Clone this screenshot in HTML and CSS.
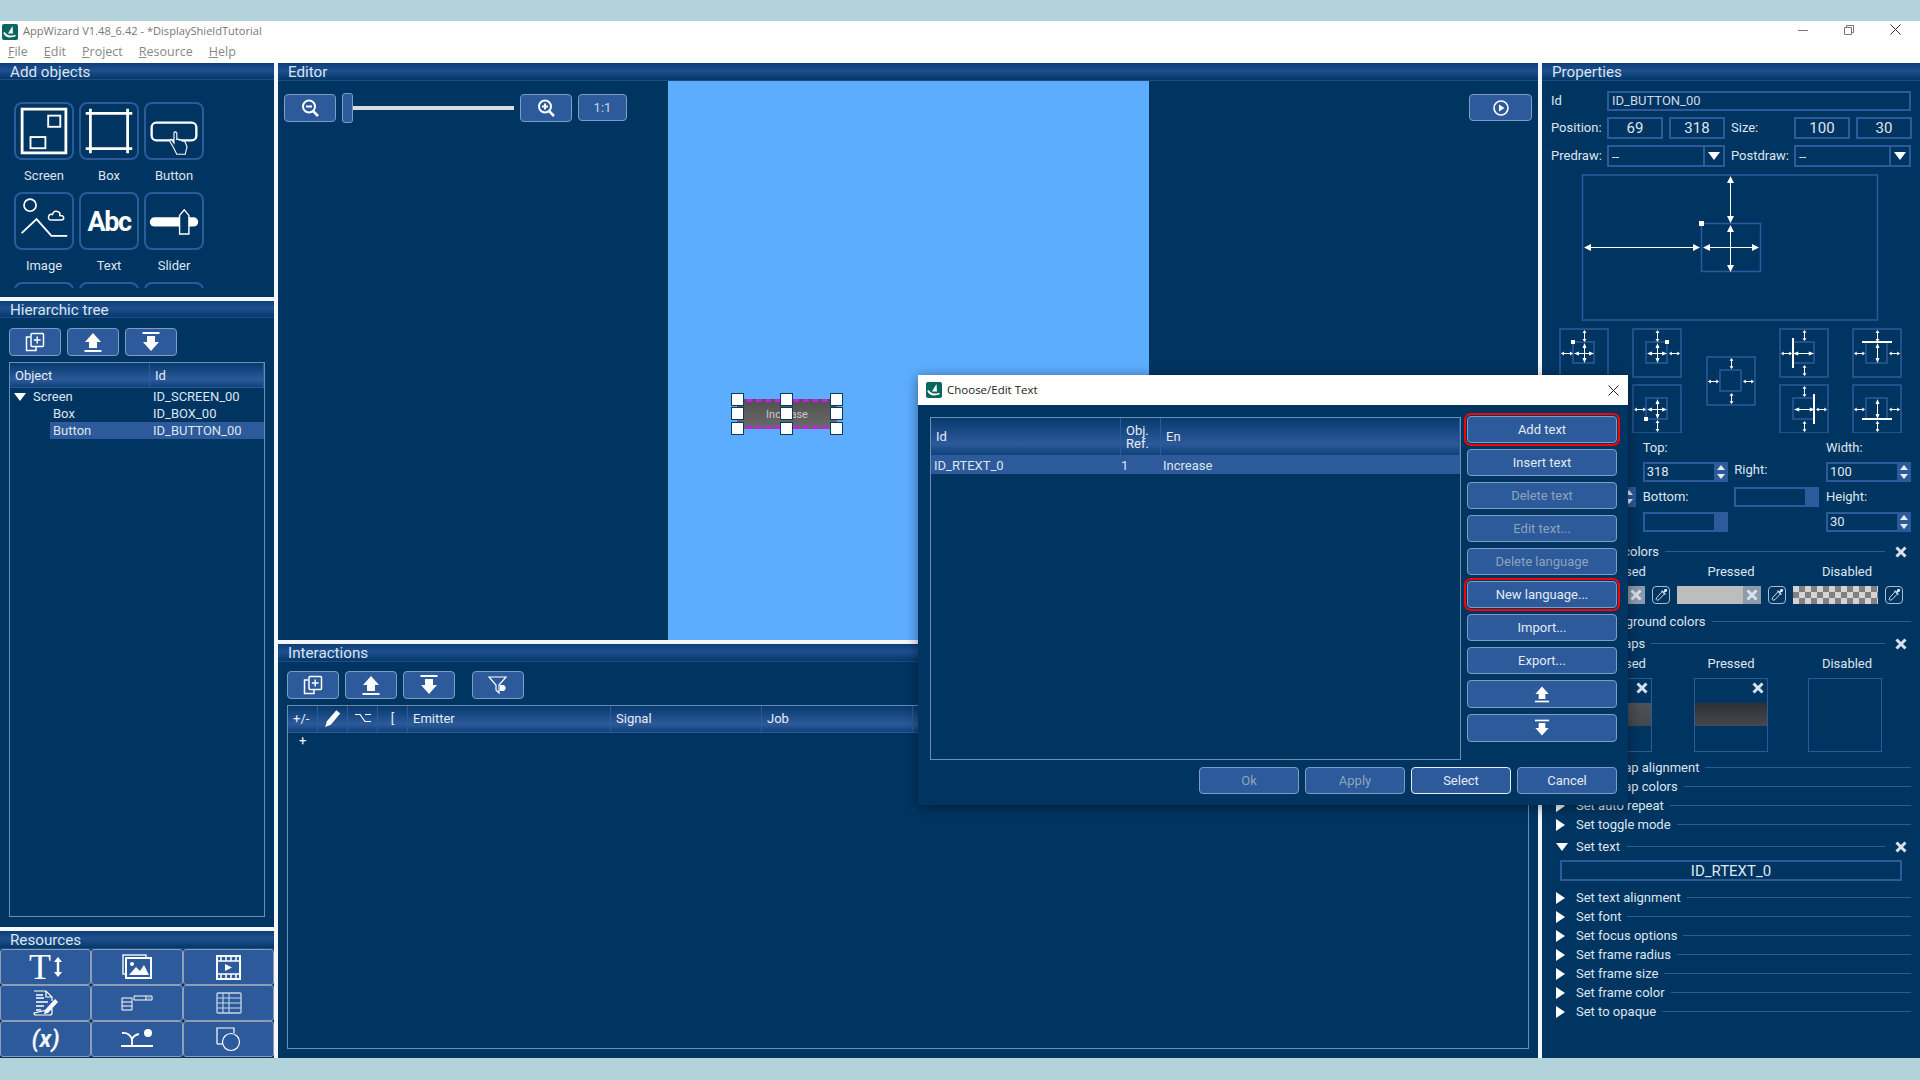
FILE: index.html
```html
<!DOCTYPE HTML>
<html>
<head>
  <title>AppWizard</title>
  <meta charset="utf-8">
  <link rel="stylesheet" href="styles.css">
</head>
<body>
<svg class="defs" aria-hidden="true">
  <symbol id="i-logo" viewBox="0 0 16 16">
    <rect width="16" height="16" rx="2" fill="#0c6660"/>
    <path d="M10.5 2 L11 9.5 L6 9.5 Z" fill="#fff"/>
    <path d="M2 8.5 Q5 14.5 13.5 11.5" fill="none" stroke="#fff" stroke-width="1.8"/>
  </symbol>
  <symbol id="i-copy" viewBox="0 0 24 24">
    <path d="M7 7 H3.5 V20.5 H13 V17" fill="none" stroke="#fff" stroke-width="1.5"/>
    <rect x="8" y="3.5" width="12.5" height="13" rx="1" fill="none" stroke="#fff" stroke-width="1.5"/>
    <path d="M14.2 6.5 V13.5 M10.8 10 H17.6" stroke="#fff" stroke-width="1.5"/>
  </symbol>
  <symbol id="i-up" viewBox="0 0 24 24">
    <path d="M12 3 L20 12 H16 V18 H8 V12 H4 Z" fill="#fff"/>
    <rect x="3.5" y="20" width="17" height="2" fill="#fff"/>
  </symbol>
  <symbol id="i-down" viewBox="0 0 24 24">
    <rect x="3.5" y="2" width="17" height="2" fill="#fff"/>
    <path d="M12 21 L20 12 H16 V6 H8 V12 H4 Z" fill="#fff"/>
  </symbol>
  <symbol id="i-x" viewBox="0 0 12 12">
    <path d="M1.5 1.5 L10.5 10.5 M10.5 1.5 L1.5 10.5" stroke="#d9e2ec" stroke-width="3"/>
  </symbol>
  <symbol id="i-pip" viewBox="0 0 18 18">
    <path d="M10.5 5 L13 7.5 L7 14 L4.5 15 L3.5 14 L4.5 11.5 Z" fill="none" stroke="#e4ebf3" stroke-width="1"/>
    <path d="M9.5 4 L14 8.5" stroke="#e4ebf3" stroke-width="1.3"/>
    <path d="M11.5 5.5 L13 2.5 Q14.5 1.5 15.5 2.5 Q16.5 3.5 15.5 5 L12.5 6.5 Z" fill="#e4ebf3"/>
  </symbol>
  <symbol id="da-h" viewBox="0 0 12 5" preserveAspectRatio="none">
    <path d="M0 2.5 L3 .5 V4.5 Z M12 2.5 L9 .5 V4.5 Z" fill="#fff"/><rect x="2" y="2" width="8" height="1" fill="#fff"/>
  </symbol>
  <symbol id="da-v" viewBox="0 0 5 12" preserveAspectRatio="none">
    <path d="M2.5 0 L.5 3 H4.5 Z M2.5 12 L.5 9 H4.5 Z" fill="#fff"/><rect x="2" y="2" width="1" height="8" fill="#fff"/>
  </symbol>
  <symbol id="anc" viewBox="0 0 50 50">
    <rect x="1" y="1" width="48" height="48" fill="none" stroke="#2c5a9a" stroke-width="1.5"/>
    <rect x="14" y="14" width="21" height="21" fill="none" stroke="#2c5a9a" stroke-width="1.5"/>
  </symbol>
</svg>

<div class="band"></div>
<div class="window">
  <div class="titlebar">
    <svg class="logo"><use href="#i-logo"/></svg>
    <span class="title-text">AppWizard V1.48_6.42 - *DisplayShieldTutorial</span>
    <span class="win-ctrl">
      <svg width="10" height="10"><path d="M0 5.5 H10" stroke="#777"/></svg>
      <svg width="10" height="10"><path d="M.5 2.5 H7.5 V9.5 H.5 Z M2.5 2.5 V.5 H9.5 V7.5 H7.5" fill="none" stroke="#777"/></svg>
      <svg width="11" height="11"><path d="M.5 .5 L10.5 10.5 M10.5 .5 L.5 10.5" stroke="#333"/></svg>
    </span>
  </div>
  <div class="menubar">
    <span><u>F</u>ile</span><span><u>E</u>dit</span><span><u>P</u>roject</span><span><u>R</u>esource</span><span><u>H</u>elp</span>
  </div>

  <div class="main">
    <div class="col-left">
      <section class="panel add-objects">
        <div class="panel-head head-17">Add objects</div>
        <div class="obj-scroll">
          <div class="obj-grid">
            <div class="obj">
              <svg class="obj-btn" viewBox="0 0 60 58">
                <rect x="6.5" y="5.5" width="47" height="47" fill="none" stroke="#fff" stroke-width="3"/>
                <rect x="34.5" y="12.5" width="13" height="12" fill="none" stroke="#fff" stroke-width="2"/>
                <rect x="15.5" y="35.5" width="16" height="12" fill="none" stroke="#fff" stroke-width="2"/>
              </svg>
              <span>Screen</span>
            </div>
            <div class="obj">
              <svg class="obj-btn" viewBox="0 0 60 58">
                <path d="M10 5 V53 M50 5 V53 M5 10 H55 M5 48 H55" stroke="#fff" stroke-width="3" fill="none"/>
              </svg>
              <span>Box</span>
            </div>
            <div class="obj">
              <svg class="obj-btn" viewBox="0 0 60 58">
                <rect x="6" y="20" width="48" height="19" rx="5" fill="none" stroke="#fff" stroke-width="2.5"/>
                <path d="M33 54 L29 46 L26 41 Q25 38 27 38 L30 42 L30 31 Q31 29 33 31 L33 38 Q35 37 36 39 Q38 38 39 40 Q41 39 42 41 L44 46 L42 54 Z" fill="#003562" stroke="#fff" stroke-width="1.2"/>
              </svg>
              <span>Button</span>
            </div>
            <div class="obj">
              <svg class="obj-btn" viewBox="0 0 60 58">
                <circle cx="15" cy="12" r="6.5" fill="none" stroke="#fff" stroke-width="1.8"/>
                <path d="M6 42 L22 27 L38 45 H55" fill="none" stroke="#fff" stroke-width="2"/>
                <path d="M38 28 Q34 28 35 24 Q36 21 39 22 Q41 17 45 19 Q48 20 47 23 Q52 23 51 27 Q50 28 48 28 Z" fill="none" stroke="#fff" stroke-width="1.6"/>
              </svg>
              <span>Image</span>
            </div>
            <div class="obj">
              <div class="obj-btn obj-abc">Abc</div>
              <span>Text</span>
            </div>
            <div class="obj">
              <svg class="obj-btn" viewBox="0 0 60 58">
                <rect x="4" y="25" width="52" height="10" rx="5" fill="#fff"/>
                <path d="M36 23 L41 17 L46 23 V43 H36 Z" fill="#003562" stroke="#fff" stroke-width="1.5"/>
              </svg>
              <span>Slider</span>
            </div>
            <div class="obj"><div class="obj-btn"></div></div>
            <div class="obj"><div class="obj-btn"></div></div>
            <div class="obj"><div class="obj-btn"></div></div>
          </div>
        </div>
      </section>

      <section class="panel tree">
        <div class="panel-head head-17">Hierarchic tree</div>
        <div class="tool-row tree-tools">
          <button class="tool"><svg><use href="#i-copy"/></svg></button>
          <button class="tool"><svg><use href="#i-up"/></svg></button>
          <button class="tool"><svg><use href="#i-down"/></svg></button>
        </div>
        <div class="table tree-table">
          <div class="thead tree-cols"><span>Object</span><span>Id</span></div>
          <div class="tree-row"><span class="tri-d tree-tri"></span><span class="tree-name l1">Screen</span><span class="tree-id">ID_SCREEN_00</span></div>
          <div class="tree-row"><span class="tree-name l2">Box</span><span class="tree-id">ID_BOX_00</span></div>
          <div class="tree-row sel"><span class="tree-name l2">Button</span><span class="tree-id">ID_BUTTON_00</span></div>
        </div>
      </section>

      <section class="panel resources">
        <div class="panel-head head-18">Resources</div>
        <div class="res-grid">
          <div class="res res-t"><span>T</span><svg width="8" height="20" viewBox="0 0 8 20"><path d="M4 0 L8 5 H5.2 V15 H8 L4 20 L0 15 H2.8 V5 H0 Z" fill="#fff"/></svg></div>
          <div class="res"><svg width="30" height="26" viewBox="0 0 30 26">
            <path d="M3 20 H1 V1 H24 V3" fill="none" stroke="#e8eef5" stroke-width="1.5"/>
            <rect x="4" y="4" width="25" height="20" fill="none" stroke="#fff" stroke-width="2"/>
            <circle cx="10" cy="10" r="2" fill="#fff"/><path d="M7 21 L14 13 L18 17 L22 11 L27 21 Z" fill="#fff"/></svg></div>
          <div class="res"><svg width="25" height="25" viewBox="0 0 25 25">
            <rect x="1" y="1" width="23" height="23" fill="none" stroke="#fff" stroke-width="2"/>
            <path d="M1 6 H24 M1 19 H24" stroke="#fff" stroke-width="1.5"/>
            <path d="M5 1 V6 M10 1 V6 M15 1 V6 M20 1 V6 M5 19 V24 M10 19 V24 M15 19 V24 M20 19 V24" stroke="#fff" stroke-width="1.5"/>
            <path d="M9 9 L16 12.5 L9 16 Z" fill="#fff"/></svg></div>
          <div class="res"><svg width="26" height="26" viewBox="0 0 26 26">
            <path d="M1 1 H13 L19 7 V11 M19 19 V23 Q19 25 17 25 H3 Q1 25 1 23 Z M13 1 V7 H19" fill="none" stroke="#fff" stroke-width="1.2"/>
            <path d="M3 5 H10 M3 8 H11 M3 12 H15 M3 16 H11 M3 20 H8" stroke="#fff" stroke-width="1.5"/>
            <path d="M12 20 L22 9 L25 12 L15 23 L11 24 Z" fill="#fff"/></svg></div>
          <div class="res"><svg width="32" height="16" viewBox="0 0 32 16">
            <path d="M1 3 H11 V15 H1 Z M1 7 H11 M1 11 H11 M13 1 H31 V5 H13 Z M25 1 V5" fill="none" stroke="#fff" stroke-width="1"/>
            <path d="M27 2.5 L28 3.5 L29 2.5" fill="none" stroke="#fff"/></svg></div>
          <div class="res"><svg width="26" height="22" viewBox="0 0 26 22">
            <rect x="1" y="1" width="24" height="20" rx="1" fill="none" stroke="#c7d6e8" stroke-width="1.3"/>
            <path d="M1 6 H25 M1 11 H25 M1 16 H25 M7 1 V21 M13 1 V21" stroke="#c7d6e8" stroke-width="1.1"/></svg></div>
          <div class="res res-var">(x)</div>
          <div class="res"><svg width="32" height="20" viewBox="0 0 32 20">
            <path d="M1 4 Q8 3 11 10 Q13 6 18 5" fill="none" stroke="#fff" stroke-width="1.8"/>
            <path d="M11 10 V16" stroke="#fff" stroke-width="1.8"/>
            <circle cx="27" cy="4" r="4" fill="#fff"/><rect y="16" width="32" height="2" fill="#fff"/></svg></div>
          <div class="res"><svg width="25" height="25" viewBox="0 0 25 25">
            <path d="M1 17 V1 H18 V6" fill="none" stroke="#fff" stroke-width="1.2"/><path d="M1 17 H7" stroke="#fff" stroke-width="1.2"/>
            <circle cx="15" cy="15" r="8.5" fill="none" stroke="#fff" stroke-width="1.2"/></svg></div>
        </div>
      </section>
    </div>

    <div class="col-center">
      <section class="panel editor">
        <div class="panel-head head-18">Editor</div>
        <div class="editor-body">
          <div class="zoom-tools">
            <button class="tool"><svg viewBox="0 0 24 24"><circle cx="11" cy="10.5" r="6" fill="none" stroke="#fff" stroke-width="2"/><path d="M8 10.5 H14" stroke="#fff" stroke-width="2"/><path d="M15 15 L20 20" stroke="#fff" stroke-width="2.5"/></svg></button>
            <div class="slider"><div class="slider-knob"></div><div class="slider-track"></div></div>
            <button class="tool"><svg viewBox="0 0 24 24"><circle cx="11" cy="10.5" r="6" fill="none" stroke="#fff" stroke-width="2"/><path d="M8 10.5 H14 M11 7.5 V13.5" stroke="#fff" stroke-width="2"/><path d="M15 15 L20 20" stroke="#fff" stroke-width="2.5"/></svg></button>
            <button class="tool tool-ratio">1:1</button>
          </div>
          <div class="canvas">
            <div class="cv-button">Increase</div>
            <i class="h" style="left:63px;top:312px"></i><i class="h" style="left:112px;top:312px"></i><i class="h" style="left:162px;top:312px"></i>
            <i class="h" style="left:63px;top:326px"></i><i class="h" style="left:112px;top:326px"></i><i class="h" style="left:162px;top:326px"></i>
            <i class="h" style="left:63px;top:341px"></i><i class="h" style="left:112px;top:341px"></i><i class="h" style="left:162px;top:341px"></i>
          </div>
          <div class="play-area">
            <button class="tool tool-play"><svg viewBox="0 0 24 24"><circle cx="12" cy="12" r="7" fill="none" stroke="#fff" stroke-width="1.6"/><path d="M10 8.5 L15.5 12 L10 15.5 Z" fill="#fff"/></svg></button>
          </div>
        </div>
      </section>

      <section class="panel interactions">
        <div class="panel-head head-18">Interactions</div>
        <div class="tool-row inter-tools">
          <button class="tool"><svg><use href="#i-copy"/></svg></button>
          <button class="tool"><svg><use href="#i-up"/></svg></button>
          <button class="tool"><svg><use href="#i-down"/></svg></button>
          <button class="tool tool-filter"><svg viewBox="0 0 24 24"><path d="M3 4 H20 L13 12 V20 L10 17 V12 Z" fill="none" stroke="#fff" stroke-width="1.2"/><path d="M14 12 H18 L20 15 L18 18 H14 Z" fill="#fff"/></svg></button>
        </div>
        <div class="table inter-table">
          <div class="thead inter-cols">
            <span>+/-</span>
            <span class="ic"><svg width="18" height="20" viewBox="0 0 16 18"><path d="M1 17 L2.5 12 L11 2 L14.5 5 L6 15 Z" fill="#fff"/></svg></span>
            <span class="ic"><svg width="16" height="10" viewBox="0 0 16 10"><path d="M0 1.5 H5 L10 8.5 H16 M10 1.5 H16" fill="none" stroke="#fff" stroke-width="1.2"/></svg></span>
            <span class="ic">[</span>
            <span>Emitter</span><span>Signal</span><span>Job</span><span></span>
          </div>
          <div class="inter-plus">+</div>
        </div>
      </section>
    </div>

    <section class="panel props">
      <div class="panel-head head-18">Properties</div>
      <div class="prop-row prop-id">
        <label class="lbl-a">Id</label><div class="field field-wide">ID_BUTTON_00</div>
      </div>
      <div class="prop-row prop-pos">
        <label class="lbl-a">Position:</label>
        <div class="field num">69</div><div class="field num">318</div>
        <label class="lbl-b">Size:</label>
        <div class="field num">100</div><div class="field num">30</div>
      </div>
      <div class="prop-row prop-pos">
        <label class="lbl-a">Predraw:</label>
        <div class="combo w118"><span>--</span><b><i class="tri-d"></i></b></div>
        <label class="lbl-b">Postdraw:</label>
        <div class="combo w117"><span>--</span><b><i class="tri-d"></i></b></div>
      </div>

      <svg class="anchors" viewBox="0 0 378 259">
        <rect x="40.5" y="1" width="295" height="145" fill="none" stroke="#2c5a9a" stroke-width="1.5"/>
        <rect x="159.5" y="49.5" width="59" height="48" fill="none" stroke="#2c5a9a" stroke-width="1.5"/>
        <rect x="157" y="47" width="5" height="5" fill="#fff"/>
        <path d="M188.5 5 V46 M188.5 53 V95 M44 73.5 H156 M163 73.5 H215" stroke="#fff"/>
        <path d="M188.5 2 L185 9 H192 Z M188.5 49 L185 42 H192 Z M188.5 51 L185 58 H192 Z M188.5 98 L185 91 H192 Z M42 73.5 L49 70 V77 Z M158 73.5 L151 70 V77 Z M161 73.5 L168 70 V77 Z M217 73.5 L210 70 V77 Z" fill="#fff"/>

        <g transform="translate(17,154)"><use href="#anc" width="50" height="50"/><use href="#da-v" x="23" y="2" width="5" height="12"/><use href="#da-v" x="23" y="15" width="5" height="20"/><use href="#da-h" x="2" y="23" width="12" height="5"/><use href="#da-h" x="15" y="23" width="20" height="5"/><rect x="12" y="12" width="4" height="4" fill="#fff"/></g>
        <g transform="translate(90,154)"><use href="#anc" width="50" height="50"/><use href="#da-v" x="23" y="2" width="5" height="12"/><use href="#da-v" x="23" y="15" width="5" height="20"/><use href="#da-h" x="37" y="23" width="11" height="5"/><use href="#da-h" x="15" y="23" width="20" height="5"/><rect x="33" y="12" width="4" height="4" fill="#fff"/></g>
        <g transform="translate(90,210)"><use href="#anc" width="50" height="50"/><use href="#da-v" x="23" y="36" width="5" height="12"/><use href="#da-v" x="23" y="15" width="5" height="20"/><use href="#da-h" x="2" y="23" width="12" height="5"/><use href="#da-h" x="15" y="23" width="20" height="5"/><rect x="12" y="33" width="4" height="4" fill="#fff"/></g>
        <g transform="translate(164,182)"><use href="#anc" width="50" height="50"/><use href="#da-v" x="23" y="2" width="5" height="11"/><use href="#da-v" x="23" y="37" width="5" height="11"/><use href="#da-h" x="2" y="23" width="11" height="5"/><use href="#da-h" x="37" y="23" width="11" height="5"/></g>
        <g transform="translate(237,154)"><use href="#anc" width="50" height="50"/><use href="#da-v" x="23" y="2" width="5" height="11"/><use href="#da-v" x="23" y="37" width="5" height="11"/><use href="#da-h" x="2" y="23" width="11" height="5"/><use href="#da-h" x="14" y="23" width="21" height="5"/><rect x="13" y="10" width="2" height="30" fill="#fff"/></g>
        <g transform="translate(310,154)"><use href="#anc" width="50" height="50"/><use href="#da-v" x="23" y="2" width="5" height="12"/><use href="#da-v" x="23" y="15" width="5" height="20"/><use href="#da-h" x="2" y="23" width="11" height="5"/><use href="#da-h" x="37" y="23" width="11" height="5"/><rect x="10" y="13" width="30" height="2" fill="#fff"/></g>
        <g transform="translate(237,210)"><use href="#anc" width="50" height="50"/><use href="#da-v" x="23" y="2" width="5" height="11"/><use href="#da-v" x="23" y="37" width="5" height="11"/><use href="#da-h" x="37" y="23" width="11" height="5"/><use href="#da-h" x="15" y="23" width="21" height="5"/><rect x="34" y="10" width="2" height="30" fill="#fff"/></g>
        <g transform="translate(310,210)"><use href="#anc" width="50" height="50"/><use href="#da-v" x="23" y="15" width="5" height="20"/><use href="#da-v" x="23" y="37" width="5" height="11"/><use href="#da-h" x="2" y="23" width="11" height="5"/><use href="#da-h" x="37" y="23" width="11" height="5"/><rect x="10" y="34" width="30" height="2" fill="#fff"/></g>
      </svg>

      <div class="pos-grid">
        <div class="pos-col mid">
          <label></label>
          <div class="spin"><span></span><b></b></div>
        </div>
        <div class="pos-col">
          <label>Top:</label>
          <div class="spin"><span>318</span><b></b></div>
          <label>Bottom:</label>
          <div class="spin empty"><span></span><b class="blank"></b></div>
        </div>
        <div class="pos-col mid">
          <label>Right:</label>
          <div class="spin empty"><span></span><b class="blank"></b></div>
        </div>
        <div class="pos-col">
          <label>Width:</label>
          <div class="spin"><span>100</span><b></b></div>
          <label>Height:</label>
          <div class="spin"><span>30</span><b></b></div>
        </div>
      </div>

      <div class="sec sec-x s-colors"><i class="tri-d"></i><span>Set text colors</span><em></em><svg><use href="#i-x"/></svg></div>
      <div class="state-labels"><span>Unpressed</span><span>Pressed</span><span>Disabled</span></div>
      <div class="swatches">
        <div class="swatch"><b><svg><use href="#i-x"/></svg></b></div>
        <div class="pip"><svg><use href="#i-pip"/></svg></div>
        <div class="swatch"><b><svg><use href="#i-x"/></svg></b></div>
        <div class="pip"><svg><use href="#i-pip"/></svg></div>
        <div class="swatch checker"></div>
        <div class="pip"><svg><use href="#i-pip"/></svg></div>
      </div>
      <div class="sec s-bg"><i class="tri-r"></i><span>Set background colors</span><em></em></div>
      <div class="sec sec-x s-tight"><i class="tri-d"></i><span>Set bitmaps</span><em></em><svg><use href="#i-x"/></svg></div>
      <div class="state-labels"><span>Unpressed</span><span>Pressed</span><span>Disabled</span></div>
      <div class="bitmaps">
        <div class="bitmap"><svg><use href="#i-x"/></svg><div class="bitmap-bar light"></div></div>
        <div class="bitmap"><svg><use href="#i-x"/></svg><div class="bitmap-bar"></div></div>
        <div class="bitmap bitmap-off"></div>
      </div>
      <div class="sec s-align"><i class="tri-r"></i><span>Set bitmap alignment</span><em></em></div>
      <div class="sec"><i class="tri-r"></i><span>Set bitmap colors</span><em></em></div>
      <div class="sec"><i class="tri-r"></i><span>Set auto repeat</span><em></em></div>
      <div class="sec"><i class="tri-r"></i><span>Set toggle mode</span><em></em></div>
      <div class="sec sec-x s-text"><i class="tri-d"></i><span>Set text</span><em></em><svg><use href="#i-x"/></svg></div>
      <div class="text-ref">ID_RTEXT_0</div>
      <div class="sec s-after"><i class="tri-r"></i><span>Set text alignment</span><em></em></div>
      <div class="sec"><i class="tri-r"></i><span>Set font</span><em></em></div>
      <div class="sec"><i class="tri-r"></i><span>Set focus options</span><em></em></div>
      <div class="sec"><i class="tri-r"></i><span>Set frame radius</span><em></em></div>
      <div class="sec"><i class="tri-r"></i><span>Set frame size</span><em></em></div>
      <div class="sec"><i class="tri-r"></i><span>Set frame color</span><em></em></div>
      <div class="sec"><i class="tri-r"></i><span>Set to opaque</span><em></em></div>
    </section>
  </div>

  <div class="dialog">
    <div class="dlg-title">
      <svg class="dlg-logo"><use href="#i-logo"/></svg>
      <span>Choose/Edit Text</span>
      <svg class="dlg-close" width="11" height="11"><path d="M.5 .5 L10.5 10.5 M10.5 .5 L.5 10.5" stroke="#222"/></svg>
    </div>
    <div class="dlg-main">
      <div class="table dlg-table">
        <div class="thead dlg-cols"><span>Id</span><span class="two">Obj.<br>Ref.</span><span>En</span></div>
        <div class="dlg-row"><span>ID_RTEXT_0</span><span>1</span><span>Increase</span></div>
      </div>
      <div class="dlg-btns">
        <button class="btn marked">Add text</button>
        <button class="btn">Insert text</button>
        <button class="btn off">Delete text</button>
        <button class="btn off">Edit text...</button>
        <button class="btn off">Delete language</button>
        <button class="btn marked">New language...</button>
        <button class="btn">Import...</button>
        <button class="btn">Export...</button>
        <button class="btn btn-ic"><svg width="24" height="24"><use href="#i-up"/></svg></button>
        <button class="btn btn-ic"><svg width="24" height="24"><use href="#i-down"/></svg></button>
      </div>
    </div>
    <div class="dlg-foot">
      <button class="btn off">Ok</button>
      <button class="btn off">Apply</button>
      <button class="btn default">Select</button>
      <button class="btn">Cancel</button>
    </div>
  </div>
</div>
<div class="band band-bottom"></div>
</body>
</html>
```

FILE: styles.css
```css
html, body{
  margin: 0; padding: 0; width: 100%; height: 100%;
}
body{
  width: 1920px;
  height: 1080px;
  overflow: hidden;
  background: #b2d3da;
  color: #dde6f0;
  font-family: "Roboto", "Liberation Sans", sans-serif;
  font-size: 13px;
}
.defs{ position: absolute; width: 0; height: 0; }
.band{ height: 21px; background: #b2d3da; }
.band-bottom{ height: 22px; }
.window{ position: relative; height: 1037px; background: #fff; }

/* title + menu */
.titlebar{
  height: 21px;
  display: flex;
  align-items: center;
  padding-left: 2px;
  color: #777;
  font-family: "Open Sans", sans-serif;
  font-size: 11.1px;
}
.logo{ width: 16px; height: 16px; }
.title-text{ margin-left: 5px; margin-top: -2px; }
.win-ctrl{
  margin-left: auto;
  display: flex;
  align-items: center;
  gap: 36px;
  margin-right: 19px;
  margin-top: -4px;
}
.menubar{
  height: 21px;
  display: flex;
  align-items: center;
  gap: 16px;
  padding: 0 0 2px 8px;
  box-sizing: border-box;
  color: #888;
  font-family: "Open Sans", sans-serif;
  font-size: 12.5px;
}

/* main columns */
.main{ display: flex; height: 995px; gap: 4px; background: #f4f6f8; }
.col-left{ width: 274px; display: flex; flex-direction: column; gap: 4px; }
.col-center{ width: 1260px; display: flex; flex-direction: column; gap: 4px; }
.panel{ background: #003562; overflow: hidden; }
.panel-head{
  padding-left: 10px;
  font-size: 15.2px;
  color: #dbe5ef;
  background: linear-gradient(#0c3f77, #1f4f8e 45%, #03386a);
  border-bottom: 1px solid #1d4d84;
  box-sizing: border-box;
}
.head-17{ height: 17px; line-height: 18px; }
.add-objects .head-17{ line-height: 19px; }
.head-18{ height: 18px; line-height: 19px; }

/* add objects */
.add-objects{ height: 234px; }
.obj-scroll{ height: 186px; margin-top: 22px; overflow: hidden; }
.obj-grid{
  display: grid;
  grid-template-columns: 60px 60px 60px;
  column-gap: 5px;
  grid-auto-rows: 90px;
  padding-left: 14px;
}
.obj{ display: flex; flex-direction: column; align-items: center; }
.obj span{ margin-top: 8px; line-height: 16px; }
.obj-btn{
  width: 60px;
  height: 58px;
  box-sizing: border-box;
  border: 2px solid #2c5a9a;
  border-radius: 8px;
  display: block;
  flex: none;
}
.obj-abc{
  color: #fff;
  font-weight: 700;
  font-size: 27px;
  letter-spacing: -1.5px;
  text-align: center;
  line-height: 56px;
}

/* tool buttons */
.tool-row{ display: flex; gap: 6px; }
.tool{
  width: 52px;
  height: 28px;
  padding: 0;
  background: #2c5a9a;
  border: 1px solid #7f9cc2;
  border-radius: 4px;
  color: #c9d6e6;
  font-family: inherit;
  font-size: 13px;
  display: flex;
  align-items: center;
  justify-content: center;
}
.tool svg{ width: 24px; height: 24px; }
.tree-tools{ margin: 10px 0 6px 9px; }

/* tables */
.table{ border: 1px solid #6d8db5; box-sizing: border-box; }
.thead{
  display: grid;
  align-items: center;
  background: linear-gradient(#07396d, #2c5a9a 70%, #0f4279);
  border-bottom: 1px solid #2c5a9a;
  color: #e6edf5;
}
.thead span{
  height: 100%;
  display: flex;
  align-items: center;
  padding-left: 5px;
  box-sizing: border-box;
  border-right: 1px solid #2c5a9a;
}
.tree{ height: 626px; }
.tree-table{ width: 256px; height: 555px; margin-left: 9px; }
.tree-cols{ height: 24px; grid-template-columns: 140px 1fr; }
.tree-row{ height: 17px; display: flex; align-items: center; position: relative; }
.tree-row.sel::before{
  content: "";
  position: absolute;
  left: 40px; right: 0; top: 0; bottom: 0;
  background: #2c5a9a;
}
.tree-tri{ margin-left: 4px; position: relative; }
.tree-name{ position: absolute; }
.tree-name.l1{ left: 23px; }
.tree-name.l2{ left: 43px; }
.tree-id{ position: absolute; left: 143px; }

/* resources */
.resources{ height: 127px; }
.res-grid{
  display: grid;
  grid-template-columns: 91px 92px 91px;
  grid-template-rows: 36px 36px 36px;
  height: 109px;
  background: #003562;
}
.res{
  background: #2c5a9a;
  border: 1px solid #8e9db3;
  border-radius: 3px;
  box-sizing: border-box;
  display: flex;
  align-items: center;
  justify-content: center;
  color: #fff;
}
.res-t span{ font-family: "Liberation Serif", serif; font-size: 36px; line-height: 30px; margin-right: 3px; }
.res-var{ font-weight: 700; font-style: italic; font-size: 24px; color: #f1f4f8; }

/* editor */
.editor{ height: 577px; }
.editor-body{ display: flex; height: 559px; }
.zoom-tools{ width: 390px; display: flex; align-items: flex-start; padding: 13px 0 0 6px; box-sizing: border-box; }
.slider{ width: 172px; height: 30px; margin: -1px 6px 0 6px; display: flex; align-items: center; flex: none; }
.slider-knob{ width: 11px; height: 30px; box-sizing: border-box; background: #2c5a9a; border: 1px solid #7f9cc2; border-radius: 3px; flex: none; }
.slider-track{ width: 161px; height: 4px; background: #d8dde3; }
.tool-ratio{ width: 49px; height: 27px; margin-left: 6px; }
.canvas{ position: relative; width: 481px; background: #5dadff; flex: none; }
.cv-button{
  position: absolute;
  left: 69px; top: 318px;
  width: 100px; height: 30px;
  box-sizing: border-box;
  border: 3px dashed #c81ee0;
  background: linear-gradient(#505050, #6b6b6b) border-box;
  color: #c9c9c9;
  font-size: 11px;
  text-align: center;
  line-height: 26px;
}
.canvas .h{
  position: absolute;
  width: 13px; height: 13px;
  box-sizing: border-box;
  background: #fff;
  border: 1px solid #0a3a5e;
}
.play-area{ flex: 1; display: flex; justify-content: flex-end; padding: 13px 6px 0 0; box-sizing: border-box; }
.tool-play{ width: 63px; height: 27px; }

/* interactions */
.interactions{ height: 414px; }
.inter-tools{ margin: 9px 0 6px 9px; }
.tool-filter{ margin-left: 11px; }
.inter-table{ width: 1242px; height: 344px; margin-left: 9px; }
.inter-cols{
  height: 26px;
  grid-template-columns: 30px 30px 30px 30px 203px 151px 151px 1fr;
}
.inter-cols span{ padding-bottom: 2px; }
.inter-cols .ic{ justify-content: center; padding-left: 0; }
.inter-plus{ padding: 0 0 0 11px; color: #fff; line-height: 16px; }

/* properties */
.props{ width: 378px; }
.prop-row{ display: flex; align-items: center; padding-left: 9px; }
.prop-row label{ margin-top: -2px; }
.prop-id{ height: 20px; margin-top: 10px; }
.prop-pos{ height: 22px; margin-top: 6px; }
.lbl-a{ width: 56px; flex: none; }
.lbl-b{ width: 63px; flex: none; margin-left: 6px; }
.field{
  box-sizing: border-box;
  height: 100%;
  border: 2px solid #2c5a9a;
  display: flex;
  align-items: center;
}
.field-wide{ width: 304px; padding: 0 0 2px 3px; color: #cdd9e6; }
.num{ justify-content: center; font-size: 15px; margin-right: 6px; width: 56px; flex: none; }
.prop-pos .num:nth-of-type(2), .prop-pos .num:nth-of-type(4){ margin-right: 0; }
.combo{
  box-sizing: border-box;
  height: 100%;
  border: 2px solid #2c5a9a;
  display: flex;
  align-items: center;
  flex: none;
  padding-left: 3px;
}
.combo span{ flex: 1; }
.combo b{
  width: 18px;
  height: 100%;
  border-left: 2px solid #2c5a9a;
  display: flex;
  align-items: center;
  justify-content: center;
}
.w118{ width: 118px; }
.w117{ width: 117px; }
.tri-d{
  display: inline-block;
  width: 0; height: 0;
  border-left: 6px solid transparent;
  border-right: 6px solid transparent;
  border-top: 8px solid #fff;
}
.tri-r{
  display: inline-block;
  width: 0; height: 0;
  border-top: 6px solid transparent;
  border-bottom: 6px solid transparent;
  border-left: 9px solid #fff;
}
.anchors{ display: block; width: 378px; height: 259px; margin-top: 7px; }

.pos-grid{
  display: grid;
  grid-template-columns: repeat(4, 85px);
  column-gap: 6.67px;
  margin: 5px 0 0 9px;
}
.pos-col{ display: flex; flex-direction: column; }
.pos-col label{ height: 20px; line-height: 20px; }
.pos-col label:nth-of-type(2){ line-height: 18px; }
.pos-col .spin{ margin: 4px 0 6px; }
.pos-col .spin:last-child{ margin-bottom: 0; }
.pos-col.mid{ padding-top: 22px; }
.pos-col.mid .spin{ margin-top: 7px; }
.spin{
  height: 20px;
  box-sizing: border-box;
  border: 2px solid #2c5a9a;
  display: flex;
  align-items: center;
  padding-left: 2px;
  color: #dfe7f0;
}
.spin span{ flex: 1; padding-bottom: 2px; }
.spin b{
  width: 14px;
  margin-right: -2px;
  height: 20px;
  background: #2c5a9a;
  position: relative;
}
.spin b::before{
  content: "";
  position: absolute;
  left: 3px; top: 3px;
  border-left: 4px solid transparent;
  border-right: 4px solid transparent;
  border-bottom: 5px solid #e6edf5;
}
.spin b::after{
  content: "";
  position: absolute;
  left: 3px; bottom: 3px;
  border-left: 4px solid transparent;
  border-right: 4px solid transparent;
  border-top: 5px solid #e6edf5;
}
.spin b.blank::before, .spin b.blank::after{ display: none; }

.sec{
  height: 19px;
  display: flex;
  align-items: center;
  padding: 0 9px 0 14px;
}
.sec i{ flex: none; }
.sec .tri-d{ margin-right: 8px; }
.sec .tri-r{ margin-right: 11px; }
.sec span{ white-space: nowrap; }
.sec em{ flex: 1; height: 1px; background: #2c5a9a; margin-left: 6px; }
.sec svg{ width: 12px; height: 12px; margin: 0 4px 0 10px; flex: none; }
.s-colors{ margin-top: 10px; }
.s-bg{ margin-top: 8px; }
.s-tight{ margin-top: 3px; }
.s-align{ margin-top: 6px; }
.s-text{ margin-top: 3px; }
.s-after{ margin-top: 7px; }

.state-labels{
  display: grid;
  grid-template-columns: repeat(3, 116px);
  height: 18px;
  line-height: 18px;
  margin: 2px 0 0 15px;
  text-align: center;
}
.swatches{ display: flex; gap: 7px; height: 18px; margin: 5px 0 0 19px; }
.swatch{
  width: 84px;
  background: #bdbdbd;
  display: flex;
  justify-content: flex-end;
  flex: none;
}
.swatch b{
  width: 18px;
  background: #8c9aab;
  display: flex;
  align-items: center;
  justify-content: center;
}
.swatch svg{ width: 12px; height: 12px; }
.checker{
  width: 85px;
  background-color: #d4d4d4;
  background-image:
    linear-gradient(45deg, #808080 25%, transparent 25%, transparent 75%, #808080 75%),
    linear-gradient(45deg, #808080 25%, transparent 25%, transparent 75%, #808080 75%);
  background-size: 12px 12px;
  background-position: 0 0, 6px 6px;
}
.pip{
  width: 18px;
  box-sizing: border-box;
  border: 1px solid #a9bcd3;
  border-radius: 4px;
  flex: none;
}
.pip svg{ width: 16px; height: 16px; display: block; }
.bitmaps{
  display: grid;
  grid-template-columns: repeat(3, 116px);
  height: 74px;
  margin: 5px 0 0 15px;
}
.bitmap{
  width: 74px;
  height: 74px;
  box-sizing: border-box;
  border: 1px solid #2c5a9a;
  margin-left: 21px;
  position: relative;
}
.bitmap svg{ position: absolute; right: 3px; top: 3px; width: 12px; height: 12px; }
.bitmap-bar{
  margin-top: 24px;
  height: 23px;
  background: linear-gradient(#2c3036, #46494e);
}
.bitmap-bar.light{ background: linear-gradient(#4e5156, #44474c); }
.bitmap-off{ margin-left: 19px; }
.text-ref{
  width: 342px;
  height: 21px;
  box-sizing: border-box;
  margin: 4px 0 0 18px;
  border: 2px solid #2c5a9a;
  text-align: center;
  font-size: 15px;
  line-height: 18px;
  color: #dfe7f0;
}

/* dialog floats over the window */
.dialog{
  position: absolute;
  left: 918px;
  top: 354px;
  width: 710px;
  height: 430px;
  background: #003562;
  box-shadow: 0 2px 12px rgba(0, 0, 0, .45);
}
.dlg-title{
  height: 30px;
  background: #fff;
  display: flex;
  align-items: center;
  color: #222;
  font-family: "Open Sans", sans-serif;
  font-size: 11.5px;
  padding-left: 8px;
}
.dlg-title span{ margin-top: -2px; }
.dlg-logo{ width: 16px; height: 16px; margin-right: 5px; }
.dlg-close{ margin-left: auto; margin-right: 9px; }
.dlg-main{ display: flex; gap: 6px; padding: 12px 0 0 12px; }
.dlg-table{ width: 531px; height: 343px; }
.dlg-cols{ height: 37px; grid-template-columns: 190px 40px 1fr; }
.two{ line-height: 13px; }
.dlg-row{
  height: 18px;
  background: #2c5a9a;
  display: grid;
  grid-template-columns: 187px 42px 1fr;
  align-items: center;
  padding-left: 3px;
  color: #dde6f0;
}
.dlg-btns{ display: flex; flex-direction: column; gap: 6px; margin-top: -1px; }
.btn{
  width: 150px;
  height: 27px;
  background: #2c5a9a;
  border: 1px solid #7f9cc2;
  border-radius: 4px;
  color: #e4ebf3;
  font-family: inherit;
  font-size: 13px;
  padding: 0;
}
.btn.off{ color: #8fa3bd; }
.btn.marked{ outline: 2px solid #f00; outline-offset: 1px; }
.btn-ic{ height: 28px; display: flex; align-items: center; justify-content: center; }
.btn-ic svg{ width: 20px; height: 20px; }
.dlg-foot{
  display: flex;
  justify-content: flex-end;
  gap: 6px;
  padding: 7px 11px 0 0;
}
.dlg-foot .btn{ width: 100px; }
.btn.default{ border-color: #e6edf5; }
```
